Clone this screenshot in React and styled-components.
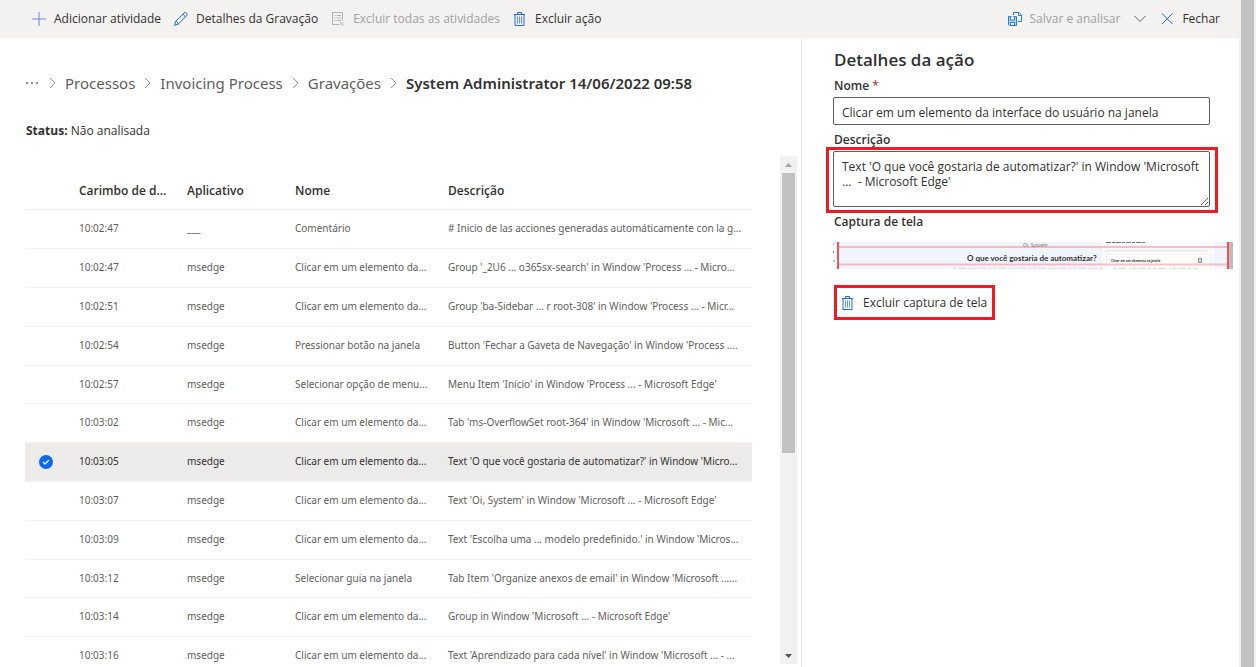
import React, { useState } from "react";
import styled, { createGlobalStyle } from "styled-components";

const GlobalStyle = createGlobalStyle`
  * { box-sizing: border-box; }
  body {
    margin: 0;
    background: #ffffff;
    color: #323130;
    font-family: "Segoe UI", "Open Sans", "Noto Sans", sans-serif;
    font-size: 12px;
  }
  button, input, textarea { font: inherit; color: inherit; }
`;

const Page = styled.div`
  display: flex;
  height: 100vh;
  overflow: hidden;
`;

const Content = styled.div`
  flex: 1;
  min-width: 0;
  display: flex;
  flex-direction: column;
`;

const Toolbar = styled.header`
  display: flex;
  justify-content: space-between;
  height: 38px;
  flex-shrink: 0;
  padding: 0 19px 0 32px;
  background: #f3f2f1;
`;

const Commands = styled.div`
  display: flex;
  align-items: center;
  gap: 13px;
`;

const CommandButton = styled.button`
  display: flex;
  align-items: center;
  gap: 8px;
  padding: 0;
  border: none;
  background: none;
  line-height: 18px;
  white-space: nowrap;
  color: ${({ disabled }) => (disabled ? "#a19f9d" : "#323130")};
`;

const Body = styled.div`
  flex: 1;
  min-height: 0;
  display: flex;
`;

const Main = styled.main`
  flex: 1;
  min-width: 0;
  display: flex;
  flex-direction: column;
  padding: 32px 4px 0 25px;
`;

const Breadcrumb = styled.nav`
  display: flex;
  align-items: center;
  gap: 9px;
  height: 26px;
  font-family: "Segoe UI", "Noto Sans", sans-serif;
  font-size: 15px;
  line-height: 26px;
  white-space: nowrap;
`;

const Crumb = styled.a`
  display: flex;
  align-items: center;
  color: #605e5c;
  text-decoration: none;
`;

const CurrentCrumb = styled.span`
  color: #323130;
  font-weight: 600;
`;

const Status = styled.p`
  margin: 25px 0 15px 1px;
  line-height: 20px;
`;

const ListArea = styled.div`
  flex: 1;
  min-height: 0;
  display: flex;
  gap: 28px;
  margin-bottom: 3px;
`;

const TableWrap = styled.div`
  flex: 1;
  min-width: 0;
  overflow: hidden;
  padding-top: 15px;
`;

const Table = styled.table`
  width: 100%;
  table-layout: fixed;
  border-collapse: separate;
  border-spacing: 0;
`;

const HeadCell = styled.th`
  width: ${({ $width }) => $width || "auto"};
  height: 39px;
  padding: 0;
  border-bottom: 1px solid #edebe9;
  text-align: left;
  font-weight: 600;
  white-space: nowrap;
`;

const Row = styled.tr`
  height: 39px;
  font-family: "Segoe UI", "Noto Sans", sans-serif;
  font-size: 10px;
  color: ${({ $selected }) => ($selected ? "#323130" : "#605e5c")};
  background: ${({ $selected }) => ($selected ? "#edebe9" : "#ffffff")};
  cursor: pointer;

  &:nth-child(5n) {
    height: 38px;
  }
`;

const Cell = styled.td`
  padding: 0 0 2px;
  border-bottom: 1px solid #f3f2f1;
  white-space: nowrap;
`;

const CheckCell = styled(Cell)`
  padding: 0 0 0 14px;
`;

const CheckLabel = styled.label`
  position: relative;
  display: block;
  width: 14px;
  height: 14px;
`;

const CheckInput = styled.input`
  position: absolute;
  inset: 0;
  margin: 0;
  opacity: 0;
`;

const ListScrollbar = styled.div`
  width: 17px;
  display: flex;
  flex-direction: column;
  align-items: center;
  background: #f1f1f1;
`;

const ScrollArrow = styled.svg`
  width: 17px;
  height: 17px;
  flex-shrink: 0;
`;

const ScrollTrack = styled.div`
  flex: 1;
  width: 13px;
`;

const ScrollThumb = styled.div`
  height: ${({ $size }) => $size};
  background: #c1c1c1;
`;

const PageScrollbar = styled.div`
  width: 17px;
  padding: 0 2px;
  background: #f1f1f1;
`;

const Details = styled.aside`
  width: 438px;
  flex-shrink: 0;
  padding: 10px 29px 0 31px;
  border-left: 1px solid #edebe9;
`;

const DetailsTitle = styled.h2`
  margin: 0;
  padding-left: 1px;
  font-size: 17px;
  line-height: 24px;
  font-weight: 600;
`;

const FieldLabel = styled.label`
  display: block;
  margin: ${({ $gap }) => $gap || "0"} 0 1px;
  padding-left: 1px;
  line-height: 20px;
  font-weight: 600;
`;

const Required = styled.span`
  color: #a4262c;
  font-weight: 400;
`;

const TextInput = styled.input`
  display: block;
  width: 100%;
  height: 28px;
  padding: 2px 8px 0;
  border: 1px solid #605e5c;
  border-radius: 2px;
`;

const Highlighted = styled.div`
  position: relative;

  &::after {
    content: "";
    position: absolute;
    inset: -4px -8px -6px -7px;
    border: 3px solid #ed1c24;
    pointer-events: none;
  }
`;

const TextArea = styled.textarea`
  display: block;
  width: 100%;
  height: 56px;
  padding: 7px 4px 7px 8px;
  border: 1px solid #605e5c;
  border-radius: 2px;
  line-height: 15px;
  resize: vertical;
`;

const Screenshot = styled.svg`
  display: block;
  width: 400px;
  height: 27px;
  margin: 10px 0 16px;
`;

const DeleteShotButton = styled(CommandButton)`
  height: 35px;
  margin-left: 1px;
  padding: 0 5px 0 4px;
  border: 3px solid #ed1c24;
`;

const Icon = ({ children, size = 14 }) => (
  <svg width={size} height={size} viewBox="0 0 14 14" fill="none" stroke="#2266e3" aria-hidden="true">
    {children}
  </svg>
);

const PlusIcon = () => (
  <Icon>
    <path d="M0 7H14M7 0V14" stroke="#6b83f2" />
  </Icon>
);

const PencilIcon = () => (
  <Icon>
    <path d="M1.6 9.4 9.9 1.1a1.7 1.7 0 0 1 2.6 0a1.7 1.7 0 0 1 0 2.6L4.2 12.2.6 13.4ZM8.8 2.2l2.8 2.7M1.6 9.4c1.4.1 2.4 1.2 2.6 2.8" />
  </Icon>
);

const ListDeleteIcon = () => (
  <Icon>
    <path d="M8 12.5H1.5V.5H11.5V8.5M3.5 3.5H4.5M5.5 3.5H10M3.5 6H4.5M5.5 6H10M3.5 8.5H4.5M5.5 8.5H10M9 10l3.5 3.5M12.5 10 9 13.5" stroke="#b5b3b1" />
  </Icon>
);

const TrashIcon = () => (
  <Icon>
    <path d="M1 2.5H12M4.5 2.5V.5H8.5V2.5M2 2.5V13.5H11V2.5" />
    <path d="M4.5 4.5V11.5M6.5 4.5V11.5M8.5 4.5V11.5" strokeOpacity="0.7" />
  </Icon>
);

const SaveIcon = () => (
  <Icon>
    <path d="M.5 4.5H8.5V13.5H1.5L.5 12.5Z" stroke="#2b7cc4" fill="#a9d3f2" />
    <path d="M2.5 4.5V8H6.5V4.5M2.5 13V10.5H6.5V13" stroke="#2b7cc4" fill="#ffffff" />
    <path d="M5.5 3V.5H11L13.5 3V9.5H10M10.5.5V3.5H13.5" stroke="#2b7cc4" />
  </Icon>
);

const ChevronDownIcon = () => (
  <Icon>
    <path d="M1.5 4 7 9.5l5.5-5.5" stroke="#605e5c" />
  </Icon>
);

const CloseIcon = () => (
  <Icon>
    <path d="M2 1.5 12.5 12M12.5 1.5 2 12" />
  </Icon>
);

const CrumbDots = () => (
  <svg width="15" height="12" viewBox="0 0 15 12" fill="#605e5c" aria-hidden="true">
    <circle cx="2" cy="6" r="0.9" />
    <circle cx="7" cy="6" r="0.9" />
    <circle cx="12" cy="6" r="0.9" />
  </svg>
);

const CrumbChevron = () => (
  <svg width="7" height="12" viewBox="0 0 7 12" fill="none" stroke="#8a9a98" aria-hidden="true">
    <path d="M1 1l5 5-5 5" />
  </svg>
);

const CheckIcon = () => (
  <Icon>
    <circle cx="7" cy="7" r="7" fill="#0a66f5" stroke="none" />
    <path d="M4 7l2 2 4-4" stroke="#ffffff" strokeWidth="1.3" />
  </Icon>
);

const rows = [
  ["10:02:47", "___", "Comentário", "# Inicio de las acciones generadas automáticamente con la g..."],
  ["10:02:47", "msedge", "Clicar em um elemento da...", "Group '_2U6 ... o365sx-search' in Window 'Process ... - Micro..."],
  ["10:02:51", "msedge", "Clicar em um elemento da...", "Group 'ba-Sidebar ... r root-308' in Window 'Process ... - Micr..."],
  ["10:02:54", "msedge", "Pressionar botão na janela", "Button 'Fechar a Gaveta de Navegação' in Window 'Process ...."],
  ["10:02:57", "msedge", "Selecionar opção de menu...", "Menu Item 'Início' in Window 'Process ... - Microsoft Edge'"],
  ["10:03:02", "msedge", "Clicar em um elemento da...", "Tab 'ms-OverflowSet root-364' in Window 'Microsoft ... - Mic..."],
  ["10:03:05", "msedge", "Clicar em um elemento da...", "Text 'O que você gostaria de automatizar?' in Window 'Micro..."],
  ["10:03:07", "msedge", "Clicar em um elemento da...", "Text 'Oi, System' in Window 'Microsoft ... - Microsoft Edge'"],
  ["10:03:09", "msedge", "Clicar em um elemento da...", "Text 'Escolha uma ... modelo predefinido.' in Window 'Micros..."],
  ["10:03:12", "msedge", "Selecionar guia na janela", "Tab Item 'Organize anexos de email' in Window 'Microsoft ......"],
  ["10:03:14", "msedge", "Clicar em um elemento da...", "Group in Window 'Microsoft ... - Microsoft Edge'"],
  ["10:03:16", "msedge", "Clicar em um elemento da...", "Text 'Aprendizado para cada nível' in Window 'Microsoft ... - ..."],
];

const ActionTable = ({ selected, onSelect }) => (
  <Table>
    <thead>
      <tr>
        <HeadCell $width="54px" />
        <HeadCell $width="108px">Carimbo de d...</HeadCell>
        <HeadCell $width="108px">Aplicativo</HeadCell>
        <HeadCell $width="153px">Nome</HeadCell>
        <HeadCell>Descrição</HeadCell>
      </tr>
    </thead>
    <tbody>
      {rows.map((row, i) => (
        <Row key={i} $selected={i === selected} onClick={() => onSelect(i)}>
          <CheckCell>
            <CheckLabel>
              <CheckInput
                type="checkbox"
                aria-label={row[0]}
                checked={i === selected}
                onChange={() => onSelect(i)}
              />
              {i === selected && <CheckIcon />}
            </CheckLabel>
          </CheckCell>
          {row.map((text, j) => (
            <Cell key={j}>{text}</Cell>
          ))}
        </Row>
      ))}
    </tbody>
  </Table>
);

const CapturePreview = () => (
  <Screenshot viewBox="0 0 400 27" role="img" aria-label="Captura de tela" fontFamily="Open Sans, sans-serif">
    <rect width="400" height="27" fill="#fafafa" />
    <rect x="5" width="264" height="27" fill="#f0f4fe" />
    <rect x="381" width="13" height="27" fill="#f0f4fe" />
    <rect x="396" width="4" height="27" fill="#bdbdbd" />
    <rect x="273.5" y="12.5" width="104" height="15" fill="#fdfdfd" stroke="#f2f2f2" />
    <path d="M273 8.5H374" stroke="#e6e6e6" />
    <text x="190" y="5" fontSize="5" fill="#666666">Oi, System</text>
    <text x="134" y="19" fontSize="8" fontWeight="700" fontFamily="Lato, sans-serif" fill="#333333">O que você gostaria de automatizar?</text>
    <text x="278" y="20" fontSize="3" fontWeight="700" fill="#333333">Clicar em um elemento na janela</text>
    <path d="M273 .5H312" stroke="#777777" strokeDasharray="5 1 3 1" />
    <path d="M365.5 16.5h3v4h-3zM367 16.500v4" stroke="#999999" fill="none" />
    <path d="M120 26.5H270M280 26.5H365" stroke="#d8dadf" strokeDasharray="4 2 7 3 2 2" />
    <path d="M0 1v2M.5 9v2M0 19h2" stroke="#888888" />
    <path d="M4 5H396M4 22.5H396" stroke="#ff5050" strokeOpacity="0.35" strokeWidth="2" />
    <path d="M5 0V27M395 0V27" stroke="#f25555" strokeWidth="2" />
  </Screenshot>
);

const App = () => {
  const [selected, setSelected] = useState(6);

  return (
    <>
      <GlobalStyle />
      <Page>
        <Content>
          <Toolbar>
            <Commands>
              <CommandButton><PlusIcon />Adicionar atividade</CommandButton>
              <CommandButton><PencilIcon />Detalhes da Gravação</CommandButton>
              <CommandButton disabled><ListDeleteIcon />Excluir todas as atividades</CommandButton>
              <CommandButton><TrashIcon />Excluir ação</CommandButton>
            </Commands>
            <Commands>
              <CommandButton disabled><SaveIcon />Salvar e analisar</CommandButton>
              <CommandButton aria-label="Mais opções"><ChevronDownIcon /></CommandButton>
              <CommandButton><CloseIcon />Fechar</CommandButton>
            </Commands>
          </Toolbar>
          <Body>
            <Main>
              <Breadcrumb>
                <Crumb href="#" aria-label="Mais"><CrumbDots /></Crumb>
                <CrumbChevron />
                <Crumb href="#">Processos</Crumb>
                <CrumbChevron />
                <Crumb href="#">Invoicing Process</Crumb>
                <CrumbChevron />
                <Crumb href="#">Gravações</Crumb>
                <CrumbChevron />
                <CurrentCrumb>System Administrator 14/06/2022 09:58</CurrentCrumb>
              </Breadcrumb>
              <Status><b>Status:</b> Não analisada</Status>
              <ListArea>
                <TableWrap>
                  <ActionTable selected={selected} onSelect={setSelected} />
                </TableWrap>
                <ListScrollbar>
                  <ScrollArrow><path d="M5 11l3.5-4 3.5 4z" fill="#a3a3a3" /></ScrollArrow>
                  <ScrollTrack><ScrollThumb $size="59%" /></ScrollTrack>
                  <ScrollArrow><path d="M5 7l3.5 4 3.5-4z" fill="#505050" /></ScrollArrow>
                </ListScrollbar>
              </ListArea>
            </Main>
            <Details>
              <DetailsTitle>Detalhes da ação</DetailsTitle>
              <FieldLabel htmlFor="nome" $gap="4px">Nome <Required>*</Required></FieldLabel>
              <TextInput id="nome" defaultValue="Clicar em um elemento da interface do usuário na janela" />
              <FieldLabel htmlFor="descricao" $gap="5px">Descrição</FieldLabel>
              <Highlighted>
                <TextArea
                  id="descricao"
                  defaultValue="Text 'O que você gostaria de automatizar?' in Window 'Microsoft ...  - Microsoft Edge'"
                />
              </Highlighted>
              <FieldLabel as="div" $gap="5px">Captura de tela</FieldLabel>
              <CapturePreview />
              <DeleteShotButton><TrashIcon />Excluir captura de tela</DeleteShotButton>
            </Details>
          </Body>
        </Content>
        <PageScrollbar><ScrollThumb $size="100%" /></PageScrollbar>
      </Page>
    </>
  );
};

export default App;
